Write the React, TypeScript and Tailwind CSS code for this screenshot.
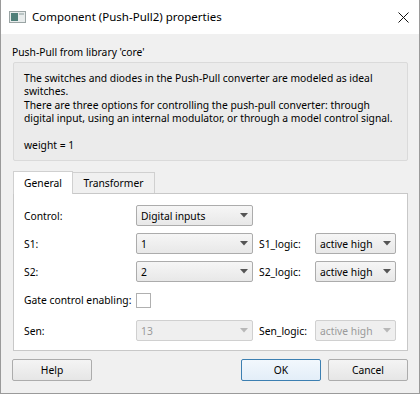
import React from "react";

const font = { fontFamily: '"Noto Sans", "Open Sans", sans-serif' };

function Arrow({ disabled }: { disabled?: boolean }) {
  return (
    <svg width="8" height="5" viewBox="0 0 8 5" className="shrink-0">
      <path d="M0 0 L8 0 L4 4.5 Z" fill={disabled ? "#b8b8b8" : "#555"} />
    </svg>
  );
}

function Combo({
  value,
  width,
  disabled,
}: {
  value: string;
  width: string;
  disabled?: boolean;
}) {
  return (
    <div
      className={`${width} flex h-[21px] shrink-0 items-center justify-between rounded-[2px] border pl-[4px] pr-[4px] ${
        disabled
          ? "border-[#d0d0d0] bg-[#efefef] text-[#9a9a9a]"
          : "border-[#acacac] bg-gradient-to-b from-[#f6f6f6] to-[#e8e8e8] text-black"
      }`}
    >
      <span className="whitespace-nowrap text-[10.3px] leading-none">{value}</span>
      <Arrow disabled={disabled} />
    </div>
  );
}

function Row({ children }: { children: React.ReactNode }) {
  return <div className="flex h-[21px] items-center">{children}</div>;
}

function Label({ text, className = "w-[112px]" }: { text: string; className?: string }) {
  return (
    <span className={`${className} shrink-0 whitespace-nowrap text-[10.3px] leading-none text-black`}>
      {text}
    </span>
  );
}

function Button({ text, primary, className = "" }: { text: string; primary?: boolean; className?: string }) {
  return (
    <div
      className={`${className} flex h-[22px] items-center justify-center rounded-[2px] border text-[10.3px] text-black ${
        primary
          ? "border-[#3c7fb1] bg-gradient-to-b from-[#f2f8fd] to-[#e3eef8]"
          : "border-[#acacac] bg-gradient-to-b from-[#f4f4f4] to-[#e6e6e6]"
      }`}
    >
      {text}
    </div>
  );
}

export default function App() {
  return (
    <div
      style={font}
      className="flex h-[394px] w-[420px] flex-col overflow-hidden border border-t-0 border-[#9a9a9a] bg-[#f0f0f0]"
    >
      {/* title bar */}
      <div className="flex h-[34px] shrink-0 items-center bg-white pl-[8px] pr-[10px]">
        <svg width="17" height="12" viewBox="0 0 17 12" className="mr-[6px]">
          <rect x="0.5" y="0.5" width="16" height="11" fill="#e8ecec" stroke="#9aa4a4" />
          <rect x="2" y="2" width="7" height="8" fill="#4f7f79" />
          <rect x="10" y="2" width="5" height="2" fill="#b9c4c4" />
        </svg>
        <span className="whitespace-nowrap text-[11.5px] text-black">Component (Push-Pull2) properties</span>
        <svg width="11" height="11" viewBox="0 0 11 11" className="ml-auto">
          <path d="M0.5 0.5 L10.5 10.5 M10.5 0.5 L0.5 10.5" stroke="#111" strokeWidth="1" />
        </svg>
      </div>

      <div className="flex flex-1 flex-col px-[11px]">
        <div className="mt-[11px] whitespace-nowrap text-[10.3px] leading-[14px] text-black">
          Push-Pull from library 'core'
        </div>

        <div className="mt-[3px] ml-[1px] rounded-[2px] border border-[#dadada] bg-[#ebebeb] pt-[9px] pb-[8px] pl-[10px] text-[10.3px] leading-[13.4px] whitespace-nowrap text-black">
          <div>The switches and diodes in the Push-Pull converter are modeled as ideal</div>
          <div>switches.</div>
          <div>There are three options for controlling the push-pull converter: through</div>
          <div>digital input, using an internal modulator, or through a model control signal.</div>
          <div>&nbsp;</div>
          <div>weight = 1</div>
        </div>

        {/* tabs */}
        <div className="mt-[9px] ml-[1px] flex h-[23px] items-end">
          <div className="z-10 -mb-px flex h-[23px] w-[60px] items-center justify-center border border-b-0 border-[#d0d0d0] bg-white text-[10.3px] text-black">
            General
          </div>
          <div className="flex h-[21px] w-[82px] items-center justify-center border border-l-0 border-b-0 border-[#d0d0d0] bg-[#f0f0f0] text-[10.3px] text-black">
            Transformer
          </div>
        </div>
        <div className="ml-[1px] flex h-[158px] flex-col border border-[#c8c8c8] bg-white pl-[10px] pt-[11px]">
          <div className="flex flex-col gap-[7px]">
            <Row>
              <Label text="Control:" />
              <Combo value="Digital inputs" width="w-[117px]" />
            </Row>
            <Row>
              <Label text="S1:" />
              <Combo value="1" width="w-[117px]" />
              <Label text="S1_logic:" className="ml-[6px] w-[56px]" />
              <Combo value="active high" width="w-[81px]" />
            </Row>
            <Row>
              <Label text="S2:" />
              <Combo value="2" width="w-[117px]" />
              <Label text="S2_logic:" className="ml-[6px] w-[56px]" />
              <Combo value="active high" width="w-[81px]" />
            </Row>
          </div>
          <div className="mt-[10px] flex h-[16px] items-center">
            <Label text="Gate control enabling:" />
            <div className="h-[15px] w-[15px] border border-[#b0b0b0] bg-white" />
          </div>
          <div className="mt-[12px]">
            <Row>
              <Label text="Sen:" />
              <Combo value="13" width="w-[117px]" disabled />
              <Label text="Sen_logic:" className="ml-[6px] w-[56px]" />
              <Combo value="active high" width="w-[81px]" disabled />
            </Row>
          </div>
        </div>

        <div className="mt-[8px] flex">
          <Button text="Help" className="w-[80px]" />
          <Button text="OK" primary className="ml-auto w-[80px]" />
          <Button text="Cancel" className="ml-[7px] w-[80px]" />
        </div>
      </div>
    </div>
  );
}
